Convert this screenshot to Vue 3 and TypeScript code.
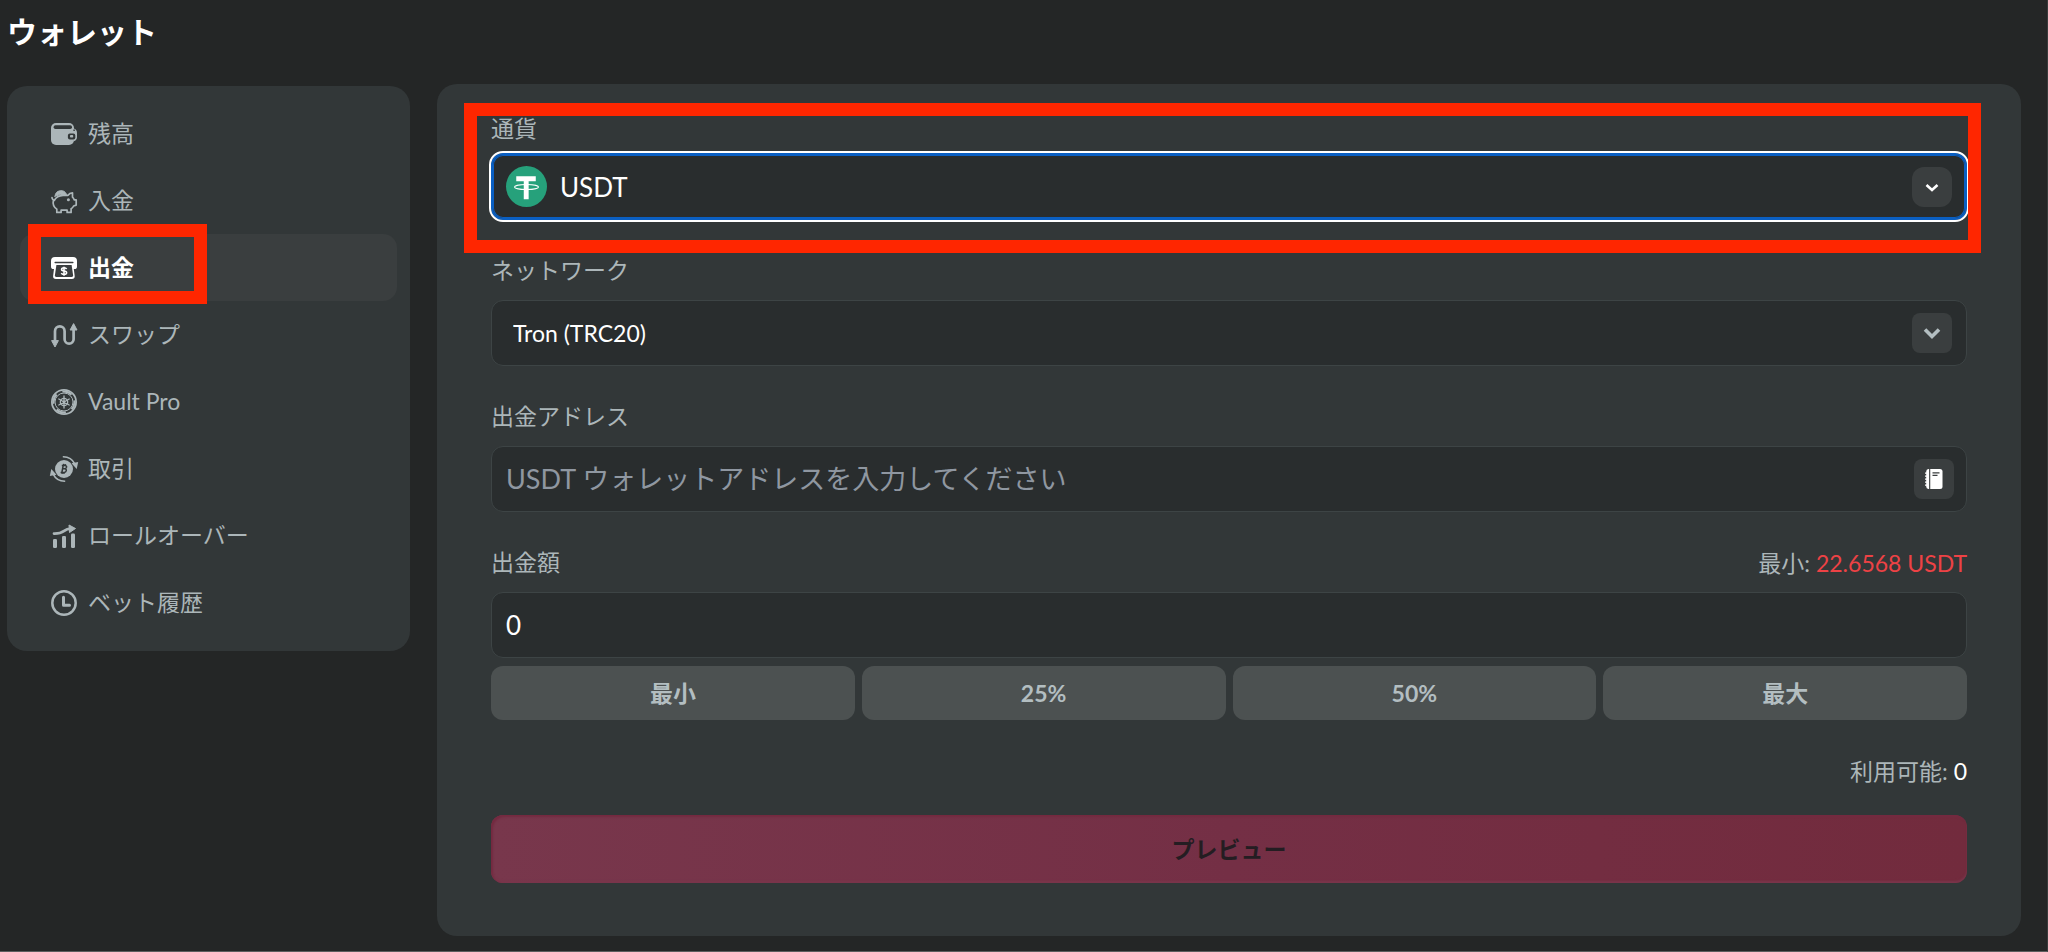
<script setup lang="ts">
import { ref } from 'vue'

type IconName = 'balance' | 'deposit' | 'withdraw' | 'swap' | 'vault' | 'transactions' | 'rollover' | 'history'

interface MenuItem {
  icon: IconName
  label: string
}

const menu: MenuItem[] = [
  { icon: 'balance', label: '残高' },
  { icon: 'deposit', label: '入金' },
  { icon: 'withdraw', label: '出金' },
  { icon: 'swap', label: 'スワップ' },
  { icon: 'vault', label: 'Vault Pro' },
  { icon: 'transactions', label: '取引' },
  { icon: 'rollover', label: 'ロールオーバー' },
  { icon: 'history', label: 'ベット履歴' },
]

const quickAmounts: string[] = ['最小', '25%', '50%', '最大']

const activeIcon: IconName = 'withdraw'
const currency = ref('USDT')
const network = ref('Tron (TRC20)')
const address = ref('')
const amount = ref('0')
</script>

<template>
  <div class="page">
    <h1 class="title">ウォレット</h1>
    <div class="layout">
      <nav class="sidebar" aria-label="ウォレット">
        <a
          v-for="item in menu"
          :key="item.icon"
          href="#"
          class="item"
          :class="{ active: item.icon === activeIcon }"
        >
          <svg class="item-icon" viewBox="0 0 26 26" aria-hidden="true">
            <g v-if="item.icon === 'balance'">
              <rect x="0" y="2" width="23" height="22" rx="5" fill="currentColor" />
              <rect x="2.6" y="4.2" width="18.4" height="3.8" rx="1.8" fill="#323738" />
              <path d="M22.6 7.5q3.4 .8 3.4 4.5v4q0 3.6-3.4 4.3z" fill="currentColor" />
              <rect x="16.9" y="12.4" width="7.4" height="6" rx="2" fill="#323738" />
              <rect x="19" y="14" width="3.2" height="2.5" rx=".8" fill="currentColor" />
              <path d="M22.4 9.3h1.4" stroke="#323738" stroke-width="1.4" />
            </g>
            <g v-else-if="item.icon === 'deposit'" fill="none" stroke="currentColor" stroke-linejoin="round" stroke-linecap="round">
              <path d="M4 8.2a6 6 0 0 1 11.6-1.6q-6.4-1.2-11.6 1.6z" fill="currentColor" stroke-width="1" />
              <path d="M1 9.5q.3 2.6 2.6 2.8M3.4 12.2q2.4-4.6 8.6-4.9h5q1.6-2.4 4.5-2.5v4.4q1.3 1.1 1.7 2.7h2v5.2l-2.6.9q-.8 1.8-2.5 2.8v3.6h-4v-2.2h-6v2.2h-4.3v-3.3q-4.7-3.1-3.4-8.900z" stroke-width="1.7" />
              <circle cx="17.4" cy="11.7" r="1.5" fill="currentColor" stroke="none" />
            </g>
            <g v-else-if="item.icon === 'withdraw'">
              <path d="M4 2h18a4 4 0 0 1 4 4v5.500a2.600 2.600 0 0 1-2.600 2.600h-.6l.9 6.900a2.800 2.800 0 0 1-2.800 3H4.900a2.800 2.800 0 0 1-2.800-3L3 14.100h-.4A2.600 2.600 0 0 1 0 11.500V6a4 4 0 0 1 4-4z" fill="currentColor" />
              <path d="M4.200 7.500h17.600" stroke="#3a3e3f" stroke-width="1.500" stroke-linecap="round" />
              <path d="M5.400 10h15.200l1.500 10.300q.2 1.600-1.400 1.600H5.300q-1.600 0-1.400-1.600z" fill="#3a3e3f" />
              <path d="M15.600 14q-.8-1.300-2.700-1.200-2.300.1-2.300 1.700 0 1.300 2.400 1.500 2.600.2 2.600 1.700 0 1.600-2.500 1.700-2 .1-2.800-1.300M13 11.700v9" fill="none" stroke="currentColor" stroke-width="1.600" />
            </g>
            <g v-else-if="item.icon === 'swap'">
              <path d="M4 19V9.200a4.800 4.800 0 0 1 9.600 0v8a4.500 4.500 0 0 0 9 0V7" fill="none" stroke="currentColor" stroke-width="2.700" />
              <path d="M4 25 .6 18.600h6.800zM22.600 1.600 26 8h-6.900z" fill="currentColor" stroke="currentColor" stroke-width="1" stroke-linejoin="round" />
            </g>
            <g v-else-if="item.icon === 'vault'" fill="none" stroke="currentColor">
              <circle cx="13" cy="13" r="12.100" stroke-width="1.800" />
              <circle cx="13" cy="13" r="10.500" stroke-width="2" stroke-dasharray="10 6.493" stroke-dashoffset="2" />
              <circle cx="13" cy="13" r="9" stroke-width="1" />
              <circle cx="13" cy="13" r="3.700" stroke-width="1.300" />
              <path d="M13 7v12M7.800 10l10.400 6M7.800 16l10.400-6" stroke-width="1.300" stroke-linecap="round" />
              <circle cx="13" cy="13" r="1.500" fill="currentColor" stroke="none" />
            </g>
            <g v-else-if="item.icon === 'transactions'">
              <circle cx="13" cy="13" r="9" fill="currentColor" />
              <path d="M11.800 .8q8.400-.2 12.200 7.400M14.200 25.200q-8.400.2-12.200-7.400" fill="none" stroke="currentColor" stroke-width="1.600" />
              <path d="M20.500 7.300l6.700-1.400-1.500 7zM5.500 18.700l-6.700 1.400 1.500-7z" fill="currentColor" />
              <path d="M10.800 9.500h3q2 .1 1.800 1.700-.3 1.500-2.300 1.500h-2 2.100q2.100.1 1.900 1.900-.3 1.800-2.500 1.800H9.600M12.200 9.500l-1.300 6.900M12.700 7.900l-.3 1.400M14.500 8.100l-.3 1.400M11.300 16.500l-.3 1.400M13.100 16.500l-.3 1.400" fill="none" stroke="#323738" stroke-width="1.500" />
            </g>
            <g v-else-if="item.icon === 'rollover'" fill="currentColor">
              <rect x="2" y="16" width="4" height="9" rx="1.200" />
              <rect x="11" y="13" width="4" height="12" rx="1.200" />
              <rect x="20" y="10.500" width="4" height="14.500" rx="1.200" />
              <path d="M3 10.600q6 .2 10.200-2.800 2.800-2 6.300-2.200" fill="none" stroke="currentColor" stroke-width="2.700" stroke-linecap="round" />
              <path d="M18 2l6.500 3.500-6 4z" stroke="currentColor" stroke-width="1" stroke-linejoin="round" />
            </g>
            <g v-else fill="none" stroke="currentColor" stroke-width="2.500">
              <circle cx="13" cy="13" r="11.700" />
              <path d="M12.500 7.200v8h6" stroke-width="3" stroke-linecap="round" stroke-linejoin="round" />
            </g>
          </svg>
          <span class="item-label">{{ item.label }}</span>
          <span v-if="item.icon === activeIcon" class="marker marker-menu" aria-hidden="true"></span>
        </a>
      </nav>

      <form class="panel" @submit.prevent>
        <div class="group group-currency">
          <label class="label" for="currency">通貨</label>
          <div class="box box-focus">
            <svg class="coin" viewBox="0 0 42 42" aria-hidden="true">
              <circle cx="21" cy="21" r="21" fill="#26a17b" />
              <path d="M10.500 10.500h20v5h-7.300v18.500h-5v-18.500h-7.700z" fill="#fff" />
              <ellipse cx="21" cy="21.500" rx="12.300" ry="2.600" fill="none" stroke="#fff" stroke-width="1.100" />
            </svg>
            <select id="currency" v-model="currency" class="control control-large">
              <option>USDT</option>
            </select>
            <span class="chip chip-round" aria-hidden="true">
              <svg class="glyph" viewBox="0 0 20 20">
                <path d="M4.500 8l5.500 5 5.500-5" fill="none" stroke="#fff" stroke-width="2.600" />
              </svg>
            </span>
          </div>
          <span class="marker marker-currency" aria-hidden="true"></span>
        </div>

        <div class="group">
          <label class="label" for="network">ネットワーク</label>
          <div class="box box-network">
            <select id="network" v-model="network" class="control">
              <option>Tron (TRC20)</option>
            </select>
            <span class="chip" aria-hidden="true">
              <svg class="glyph" viewBox="0 0 20 20">
                <path d="M3 6.500l7 7 7-7" fill="none" stroke="#b3bec1" stroke-width="3.600" />
              </svg>
            </span>
          </div>
        </div>

        <div class="group">
          <label class="label" for="address">出金アドレス</label>
          <div class="box">
            <input
              id="address"
              v-model="address"
              type="text"
              class="control control-large"
              placeholder="USDT ウォレットアドレスを入力してください"
            />
            <button type="button" class="chip" aria-label="アドレス帳">
              <svg class="glyph" viewBox="0 0 20 20" aria-hidden="true">
                <path d="M5.500 0H16a2.500 2.500 0 0 1 2.500 2.500v15A2.500 2.500 0 0 1 16 20H5.500z" fill="#fff" />
                <path d="M5.500 0v20H4.500A2.500 2.500 0 0 1 2.200 17.500v-15A2.500 2.500 0 0 1 4.500 0z" fill="#fff" />
                <path d="M1 4.200h2M1 7.200h2M1 10.200h2M1 13.200h2M1 16.200h2" stroke="#fff" stroke-width="1.200" />
                <path d="M5.700 0v20" stroke="#3a3e3f" stroke-width="1.100" />
                <path d="M8.500 3.800h7M8.500 6.300h5" stroke="#3a3e3f" stroke-width="1.300" />
              </svg>
            </button>
          </div>
        </div>

        <div class="group">
          <div class="label-row">
            <label class="label" for="amount">出金額</label>
            <p class="note">最小: <span class="danger">22.6568 USDT</span></p>
          </div>
          <div class="box">
            <input id="amount" v-model="amount" type="text" inputmode="decimal" class="control control-large" />
          </div>
        </div>

        <div class="quick">
          <button v-for="quick in quickAmounts" :key="quick" type="button" class="quick-button">{{ quick }}</button>
        </div>

        <p class="note">利用可能: <span class="value">0</span></p>
        <button type="submit" class="submit">プレビュー</button>
      </form>
    </div>
  </div>
</template>

<style>
body {
  background: #242626;
}
</style>

<style scoped>
.page {
  box-sizing: border-box;
  min-height: 100vh;
  padding: 0 26px 14px 7px;
  border-right: 1px solid #393c3c;
  border-bottom: 1px solid #5c5e5e;
  background: #242626;
  color: #acb6b9;
  font-family: Lato, "Noto Sans CJK JP", sans-serif;
  font-size: 23px;
  font-weight: 400;
  line-height: 34px;
}

.title {
  margin: 0;
  height: 84px;
  color: #fff;
  font-size: 30px;
  font-weight: 700;
  line-height: 62px;
}

.layout {
  display: flex;
  align-items: flex-start;
  gap: 27px;
}

.sidebar {
  box-sizing: border-box;
  flex: 0 0 403px;
  margin-top: 2px;
  padding: 14px 13px 15px;
  border-radius: 20px;
  background: #323738;
}

.item {
  position: relative;
  display: flex;
  align-items: center;
  gap: 11px;
  height: 67px;
  padding-left: 31px;
  border-radius: 14px;
  color: #acb6b9;
  text-decoration: none;
}

.item.active {
  background: #3a3e3f;
  color: #fff;
  font-weight: 700;
}

.item-icon {
  width: 26px;
  height: 26px;
  overflow: visible;
}

.item-label {
  padding-bottom: 2px;
}

.marker {
  position: absolute;
  box-sizing: border-box;
  border: 13px solid #ff2600;
  pointer-events: none;
}

.marker-menu {
  top: -10px;
  left: 8px;
  width: 179px;
  height: 80px;
}

.marker-currency {
  top: -9px;
  right: -14px;
  bottom: -33px;
  left: -27px;
}

.panel {
  flex: 1;
  min-width: 0;
  padding: 28px 54px 53px;
  border-radius: 20px;
  background: #323738;
}

.group {
  position: relative;
  display: flex;
  flex-direction: column;
  gap: 12px;
  margin-bottom: 34px;
}

.group-currency {
  gap: 7px;
}

.label {
  line-height: 32px;
  padding-bottom: 2px;
}

.label-row {
  display: flex;
  justify-content: space-between;
}

.box {
  box-sizing: border-box;
  display: flex;
  align-items: center;
  gap: 13px;
  height: 66px;
  padding: 0 12px 0 14px;
  border: 1px solid #3d4445;
  border-radius: 12px;
  background: #292d2e;
}

.box-network {
  padding: 0 14px 0 21px;
}

.box-focus {
  height: 67px;
  border: 2px solid #0a5fc2;
  outline: 2px solid #fff;
  box-shadow: inset 0 0 0 1px #0a5fc2;
  padding: 0 13px;
}

.coin {
  flex: none;
  width: 41px;
  height: 41px;
}

.control {
  flex: 1;
  min-width: 0;
  height: 60px;
  margin: 0;
  padding: 0;
  border: 0;
  outline: 0;
  appearance: none;
  background: transparent;
  color: #fff;
  font: inherit;
}

.control-large {
  font-size: 26px;
}

.control::placeholder {
  color: #8f97a1;
  font-size: 27px;
  opacity: 1;
}

.chip {
  flex: none;
  display: flex;
  align-items: center;
  justify-content: center;
  width: 40px;
  height: 40px;
  padding: 0;
  border: 0;
  border-radius: 8px;
  background: #3a3e3f;
}

.chip-round {
  border-radius: 12px;
}

.glyph {
  width: 20px;
  height: 20px;
}

.note {
  margin: 0;
  text-align: right;
}

.danger {
  color: #ed4245;
}

.value {
  color: #fff;
}

.quick {
  display: grid;
  grid-template-columns: repeat(4, 1fr);
  gap: 7px;
  margin: -26px 0 34px;
}

.quick-button {
  height: 54px;
  padding: 0;
  border: 0;
  border-radius: 12px;
  background: #4c5151;
  color: #b3bec1;
  font: inherit;
  font-weight: 700;
}

.submit {
  display: block;
  width: 100%;
  height: 68px;
  margin-top: 27px;
  padding: 0;
  border: 0;
  border-radius: 12px;
  background: linear-gradient(90deg, #78374c, #742f45 50%, #722b3d);
  box-shadow: inset 2px 2px 2px #742a40, inset 0 -2px 2px #7a354b;
  color: #241d22;
  font: inherit;
  font-weight: 700;
}
</style>
